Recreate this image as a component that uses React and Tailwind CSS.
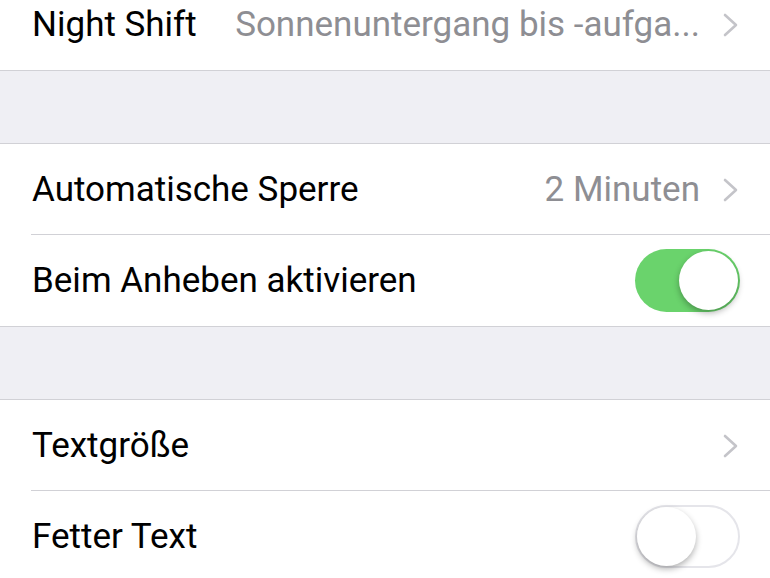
import React from 'react';

const Chevron = () => (
  <svg width="18" height="26" viewBox="0 0 18 26" className="shrink-0">
    <path d="M3 3 L14 13 L3 23" fill="none" stroke="#c4c4c9" strokeWidth="2.6" strokeLinecap="round" strokeLinejoin="round" />
  </svg>
);

const Toggle = ({ on }) => (
  <div
    className={`relative w-[105px] h-[63px] rounded-full shrink-0 ${
      on ? 'bg-[#6ad36c]' : 'bg-white border-[2px] border-[#e5e5ea]'
    }`}
  >
    <div
      className={`absolute w-[59px] h-[59px] rounded-full bg-white shadow-[0_3px_6px_rgba(0,0,0,0.3)] ${
        on ? 'right-[2px] top-[2px]' : 'left-[0px] top-[0px]'
      }`}
    />
  </div>
);

const Row = ({ label, value, chevron, toggle, divider, className = '' }) => (
  <div className={`flex items-center h-[91px] pl-[32px] pr-[30px] bg-white relative ${className}`}>
    <span className="text-black shrink-0 whitespace-nowrap">{label}</span>
    <span className="flex-1" />
    {value && (
      <span className="text-[#8e8e93] whitespace-nowrap ml-[25px]">{value}</span>
    )}
    {chevron && <span className="ml-[22px] flex items-center"><Chevron /></span>}
    {toggle !== undefined && <Toggle on={toggle} />}
    {divider && <div className="absolute left-[31px] right-0 bottom-0 h-px bg-[#d1d1d6]" />}
  </div>
);

const Gap = () => (
  <div className="h-[74px] bg-[#efeff4] border-y border-[#d1d1d6]" />
);

export default function App() {
  return (
    <div
      className="w-[770px] h-[578px] overflow-hidden bg-white text-[35px] leading-none"
      style={{ fontFamily: 'Roboto, "Liberation Sans", sans-serif' }}
    >
      <Row label="Night Shift" value="Sonnenuntergang bis -aufga..." chevron className="-mt-[21px]" />
      <Gap />
      <Row label="Automatische Sperre" value="2 Minuten" chevron divider />
      <Row label="Beim Anheben aktivieren" toggle={true} />
      <Gap />
      <Row label="Textgröße" chevron divider />
      <Row label="Fetter Text" toggle={false} />
    </div>
  );
}
